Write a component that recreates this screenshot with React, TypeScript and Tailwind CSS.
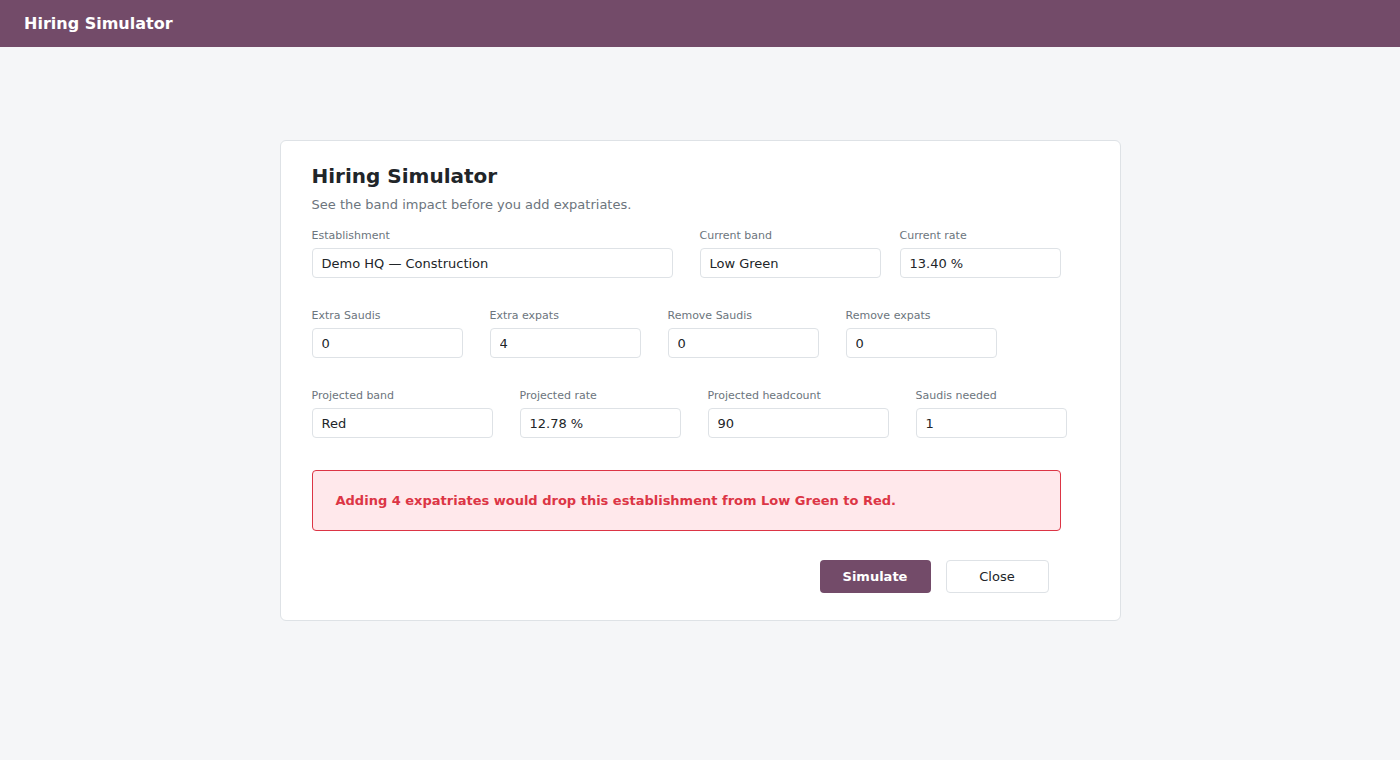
import React from 'react';

const FONT = { fontFamily: '"DejaVu Sans", "Liberation Sans", sans-serif' };

type FieldProps = { label: string; value: string; width: string; className?: string };

function Field({ label, value, width, className = '' }: FieldProps) {
  return (
    <div className={`${width} ${className} shrink-0`}>
      <div className="text-[11px] leading-4 text-[#6c757d] mt-px mb-[4px]">{label}</div>
      <input
        readOnly
        value={value}
        className="w-full h-[30px] px-[9px] border border-[#dee2e6] rounded-[4px] bg-white text-[13px] text-[#212529] outline-none"
        style={FONT}
      />
    </div>
  );
}

export default function App() {
  return (
    <div className="min-h-screen bg-[#f5f6f8]" style={FONT}>
      {/* barra superior */}
      <header className="h-[47px] bg-[#734b69] flex items-center px-6">
        <span className="text-white text-base font-bold">Hiring Simulator</span>
      </header>

      <main className="flex justify-center pt-[93px]">
        <div className="w-[841px] h-[481px] bg-white border border-[#dee2e6] rounded-[6px] px-[31px] pt-[21px]">
          <h1 className="text-[20px] leading-7 font-bold text-[#212529]">Hiring Simulator</h1>
          <p className="mt-[5px] text-[13px] leading-5 text-[#6c757d]">
            See the band impact before you add expatriates.
          </p>

          <div className="mt-[12px] flex">
            <Field label="Establishment" value="Demo HQ — Construction" width="w-[361px]" />
            <Field label="Current band" value="Low Green" width="w-[181px]" className="ml-[27px]" />
            <Field label="Current rate" value="13.40 %" width="w-[161px]" className="ml-[19px]" />
          </div>

          <div className="mt-[29px] flex gap-[27px]">
            <Field label="Extra Saudis" value="0" width="w-[151px]" />
            <Field label="Extra expats" value="4" width="w-[151px]" />
            <Field label="Remove Saudis" value="0" width="w-[151px]" />
            <Field label="Remove expats" value="0" width="w-[151px]" />
          </div>

          <div className="mt-[29px] flex gap-[27px]">
            <Field label="Projected band" value="Red" width="w-[181px]" />
            <Field label="Projected rate" value="12.78 %" width="w-[161px]" />
            <Field label="Projected headcount" value="90" width="w-[181px]" />
            <Field label="Saudis needed" value="1" width="w-[151px]" />
          </div>

          {/* aviso */}
          <div className="mt-8 w-[749px] h-[61px] flex items-center px-[23px] bg-[#ffe8eb] border border-[#dc3545] rounded-[4px]">
            <span className="text-[13px] font-bold text-[#dc3545]">
              Adding 4 expatriates would drop this establishment from Low Green to Red.
            </span>
          </div>

          <div className="mt-[29px] flex justify-end gap-[15px] pr-[40px]">
            <button
              className="w-[111px] h-[33px] rounded-[4px] bg-[#734b69] text-white text-[13px] font-bold"
              style={FONT}
            >
              Simulate
            </button>
            <button
              className="w-[103px] h-[33px] rounded-[4px] bg-white border border-[#dee2e6] text-[#212529] text-[13px]"
              style={FONT}
            >
              Close
            </button>
          </div>
        </div>
      </main>
    </div>
  );
}
